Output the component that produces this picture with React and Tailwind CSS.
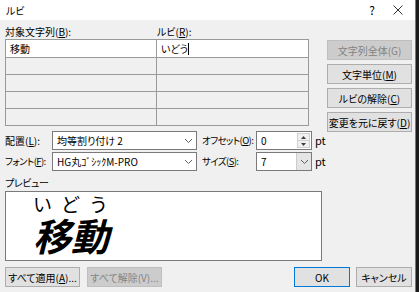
const jp = "font-['Meiryo_UI','Noto_Sans_CJK_JP',sans-serif] [font-feature-settings:'palt']"

function Btn({ children, disabled, primary, className = "" }) {
    return (
        <div
            className={`flex items-center justify-center h-[20px] text-[10px] whitespace-nowrap border ${
                disabled
                    ? "bg-[#cccccc] border-[#bfbfbf] text-[#838383]"
                    : primary
                    ? "bg-[#e1e1e1] border-[#0078d7] text-black"
                    : "bg-[#e1e1e1] border-[#adadad] text-black"
            } ${className}`}
        >
            {children}
        </div>
    )
}

function Chevron() {
    return (
        <svg width="9" height="6" viewBox="0 0 9 6">
            <path d="M1 1 L4.5 4.5 L8 1" fill="none" stroke="#606060" strokeWidth="1" />
        </svg>
    )
}

function Select({ value, className = "", shaded }) {
    return (
        <div className={`flex h-[19px] bg-white border border-[#7a7a7a] ${className}`}>
            <div className="flex-1 flex items-center pl-[4px] text-[10px] text-black whitespace-nowrap">{value}</div>
            <div
                className={`w-[15px] flex items-center justify-center ${
                    shaded ? "bg-[#e5e5e5] border-l border-[#cccccc]" : ""
                }`}
            >
                <Chevron />
            </div>
        </div>
    )
}

export default function App() {
    const rows = [
        ["移動", "いどう"],
        ["", ""],
        ["", ""],
        ["", ""],
        ["", ""],
    ]

    return (
        <div className={`w-[419px] h-[292px] overflow-hidden bg-[#1b1b1b] flex ${jp}`}>
            <div className="w-[416px] h-full bg-[#f0f0f0] border-r border-[#7a7a7a] flex flex-col">
                {/* title bar */}
                <div className="h-[20px] shrink-0 bg-white flex items-center pl-[6px] text-[10px] text-black">
                    <span className="flex-1">ルビ</span>
                    <span className="w-[34px] text-center text-[12px]">?</span>
                    <svg width="10" height="10" viewBox="0 0 10 10" className="mr-[12px] ml-[4px]">
                        <path d="M0.5 0.5 L9.5 9.5 M9.5 0.5 L0.5 9.5" stroke="#333" strokeWidth="1" />
                    </svg>
                </div>

                <div className="flex pl-[5px] pt-[5px]">
                    {/* left column */}
                    <div className="flex flex-col w-[322px] text-[10px] text-black whitespace-nowrap">
                        <div className="flex h-[13px] leading-[13px]">
                            <span className="w-[152px]">
                                対象文字列(<u>B</u>):
                            </span>
                            <span>
                                ルビ(<u>R</u>):
                            </span>
                        </div>
                        <div className="mt-[1px] w-[304px] border border-[#9a9a9a] grid grid-cols-[151px_151px]">
                            {rows.map((r, i) =>
                                r.map((c, j) => (
                                    <div
                                        key={`${i}-${j}`}
                                        className={`h-[17px] ${i === 0 ? "bg-white" : "bg-[#f0f0f0] border-t border-[#9a9a9a]"} ${
                                            j === 0 ? "border-r border-[#9a9a9a]" : ""
                                        } flex items-center pl-[4px]`}
                                    >
                                        {c}
                                        {i === 0 && j === 1 && <span className="w-px h-[12px] bg-black" />}
                                    </div>
                                ))
                            )}
                        </div>

                        {/* settings */}
                        <div className="flex items-center h-[19px] mt-[5px]">
                            <span className="w-[47px]">
                                配置(<u>L</u>):
                            </span>
                            <Select value="均等割り付け 2" className="w-[145px]" />
                            <span className="w-[59px] pl-[5px] text-[9.5px] tracking-[-0.6px]">
                                オフセット(<u>O</u>):
                            </span>
                            <div className="flex h-[19px] w-[56px] bg-white border border-[#7a7a7a]">
                                <div className="flex-1 flex items-center pl-[4px]">0</div>
                                <div className="w-[13px] my-[1px] mr-[1px] flex flex-col bg-[#f0f0f0] border border-[#cfcfcf]">
                                    <div className="flex-1 flex items-center justify-center border-b border-[#cfcfcf]">
                                        <svg width="5" height="3" viewBox="0 0 5 3">
                                            <path d="M0 3 L2.5 0 L5 3 Z" fill="#404040" />
                                        </svg>
                                    </div>
                                    <div className="flex-1 flex items-center justify-center">
                                        <svg width="5" height="3" viewBox="0 0 5 3">
                                            <path d="M0 0 L2.5 3 L5 0 Z" fill="#404040" />
                                        </svg>
                                    </div>
                                </div>
                            </div>
                            <span className="ml-[3px] text-[11px]">pt</span>
                        </div>
                        <div className="flex items-center h-[19px] mt-[2px]">
                            <span className="w-[47px] text-[9.5px] tracking-[-0.6px]">
                                フォント(<u>F</u>):
                            </span>
                            <Select value="HG丸ｺﾞｼｯｸM-PRO" className="w-[145px]" />
                            <span className="w-[59px] pl-[5px] text-[9.5px] tracking-[-0.6px]">
                                サイズ(<u>S</u>):
                            </span>
                            <Select value="7" className="w-[56px]" shaded />
                            <span className="ml-[3px] text-[11px]">pt</span>
                        </div>
                        <div className="mt-[5px] h-[13px] leading-[13px] tracking-[-0.4px]">プレビュー</div>

                        {/* preview */}
                        <div className="mt-[2px] w-[317px] h-[70px] bg-white border border-[#7a7a7a] flex flex-col pl-[27px] overflow-hidden">
                            <div className="text-[19px] leading-[20px] mt-[2px] tracking-[9px] font-['Noto_Sans_CJK_JP',sans-serif] [font-feature-settings:normal]">
                                いどう
                            </div>
                            <div className="text-[38px] leading-[42px] font-bold italic font-['Noto_Sans_CJK_JP',sans-serif]">
                                移動
                            </div>
                        </div>
                    </div>

                    {/* right buttons */}
                    <div className="flex flex-col gap-[4px] mt-[15px] w-[85px]">
                        <Btn disabled>文字列全体(G)</Btn>
                        <Btn>
                            文字単位(<u>M</u>)
                        </Btn>
                        <Btn>
                            ルビの解除(<u>C</u>)
                        </Btn>
                        <Btn>
                            変更を元に戻す(<u>D</u>)
                        </Btn>
                    </div>
                </div>

                {/* bottom buttons */}
                <div className="flex items-center pl-[5px] mt-[6px]">
                    <Btn className="w-[75px]">
                        すべて適用(<u>A</u>)...
                    </Btn>
                    <Btn disabled className="w-[75px] ml-[7px]">
                        すべて解除(V)...
                    </Btn>
                    <div className="flex-1" />
                    <Btn primary className="w-[56px]">
                        OK
                    </Btn>
                    <Btn className="w-[56px] ml-[6px] mr-[3px]">キャンセル</Btn>
                </div>
            </div>
        </div>
    )
}
